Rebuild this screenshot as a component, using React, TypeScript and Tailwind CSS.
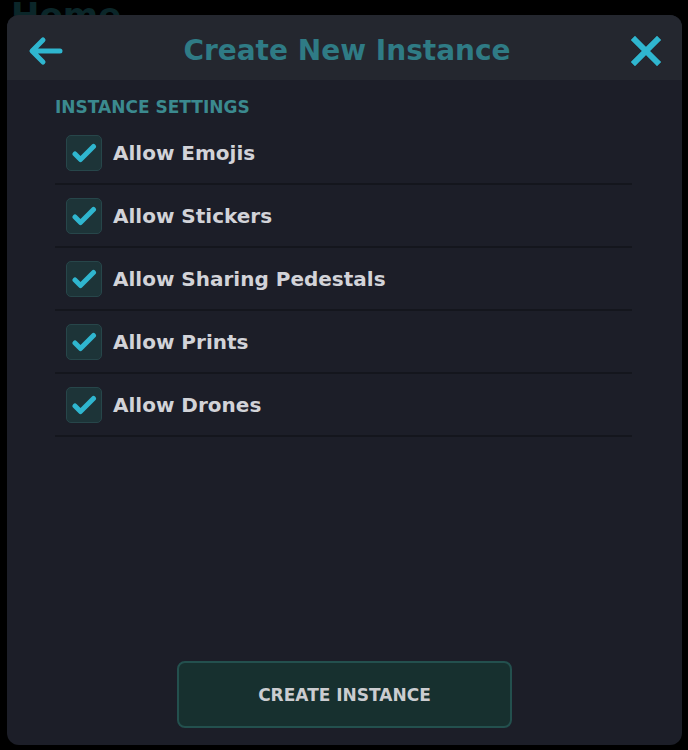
import { useState } from 'react';

const OPTIONS = [
  'Allow Emojis',
  'Allow Stickers',
  'Allow Sharing Pedestals',
  'Allow Prints',
  'Allow Drones',
];

function CheckIcon() {
  return (
    <svg width="26" height="22" viewBox="0 0 26 22" fill="none">
      <path d="M4 12 L9.5 17.5 L22.5 4.5" stroke="#2fb6cf" strokeWidth="5" strokeLinecap="round" strokeLinejoin="round" />
    </svg>
  );
}

function SettingRow({ label, checked, onToggle }: { label: string; checked: boolean; onToggle: () => void }) {
  return (
    <div
      className="flex h-[63px] items-center gap-[11px] border-b-2 border-[#14161d] pl-[11px]"
      onClick={onToggle}
    >
      <div className="flex h-[36px] w-[36px] items-center justify-center rounded-[5px] border border-[#27464a] bg-[#1d3438]">
        {checked && <CheckIcon />}
      </div>
      <span className="text-[20px] font-bold text-[#d2d3d8]">{label}</span>
    </div>
  );
}

export default function App() {
  const [checked, setChecked] = useState<boolean[]>(OPTIONS.map(() => true));

  const toggle = (i: number) => {
    setChecked((prev) => prev.map((v, j) => (j === i ? !v : v)));
  };

  return (
    <div className="relative h-[750px] w-[688px] overflow-hidden bg-black" style={{ fontFamily: '"DejaVu Sans", sans-serif' }}>
      <div className="absolute left-[11px] top-[-2px] text-[34px] font-bold leading-none text-[#0b2629]">Home</div>

      <div className="relative ml-[7px] mt-[15px] flex h-[730px] w-[675px] flex-col overflow-hidden rounded-[12px] bg-[#1c1e28]">
        <div className="flex h-[65px] items-center justify-between bg-[#24272f] px-[20px] pt-[7px]">
          <svg width="36" height="30" viewBox="0 0 36 30" fill="none">
            <path d="M33 15 H6 M16 4 L5 15 L16 26" stroke="#2fb6cf" strokeWidth="5" strokeLinecap="round" strokeLinejoin="round" />
          </svg>
          <h1 className="text-[28px] font-bold text-[#2f7b85]">Create New Instance</h1>
          <svg width="30" height="30" viewBox="0 0 30 30" fill="none" className="mr-[1px]">
            <path d="M4 4 L26 26 M26 4 L4 26" stroke="#2fb6cf" strokeWidth="6" strokeLinecap="square" />
          </svg>
        </div>

        <div className="flex flex-1 flex-col px-[48px]">
          <div className="pt-[16px] text-[17px] font-bold leading-[22px] text-[#3b8a8f]">INSTANCE SETTINGS</div>
          <div className="mt-[4px] w-[577px]">
            {OPTIONS.map((label, i) => (
              <SettingRow key={label} label={label} checked={checked[i]} onToggle={() => toggle(i)} />
            ))}
          </div>
        </div>

        <div className="flex justify-center pb-[17px]">
          <button className="flex h-[67px] w-[335px] items-center justify-center rounded-[8px] border-2 border-[#23504e] bg-[#17302f] pt-[3px] text-[17px] font-bold text-[#cbccd0]">
            CREATE INSTANCE
          </button>
        </div>
      </div>
    </div>
  );
}
